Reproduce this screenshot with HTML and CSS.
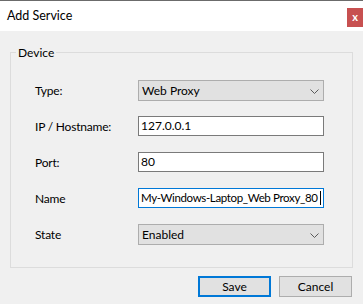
FILE: index.html
```html
<!DOCTYPE html>
<html lang="en">
<head>
    <meta charset="UTF-8">
    <title>Add Service</title>
    <link rel="stylesheet" href="styles.css">
</head>
<body>

    <div class="window">
        <!-- Title bar -->
        <div class="titlebar">
            <span class="title">Add Service</span>
            <span class="close-button">x</span>
        </div>

        <div class="content">
            <fieldset class="group">
                <legend>Device</legend>

                <div class="form-grid">
                    <label>Type:</label>
                    <div class="combo">
                        <span>Web Proxy</span>
                        <svg class="chevron" width="9" height="5" viewBox="0 0 9 5"><path d="M0.5 0.5 L4.5 4.5 L8.5 0.5" fill="none" stroke="#5a5a5a" stroke-width="1"/></svg>
                    </div>

                    <label>IP / Hostname:</label>
                    <div class="textbox">127.0.0.1</div>

                    <label>Port:</label>
                    <div class="textbox">80</div>

                    <label>Name</label>
                    <div class="textbox focused">My-Windows-Laptop_Web Proxy_80<span class="caret"></span></div>

                    <label>State</label>
                    <div class="combo">
                        <span>Enabled</span>
                        <svg class="chevron" width="9" height="5" viewBox="0 0 9 5"><path d="M0.5 0.5 L4.5 4.5 L8.5 0.5" fill="none" stroke="#5a5a5a" stroke-width="1"/></svg>
                    </div>
                </div>
            </fieldset>

            <!-- Dialog buttons -->
            <div class="buttons">
                <button class="default">Save</button>
                <button>Cancel</button>
            </div>
        </div>
    </div>

</body>
</html>
```

FILE: styles.css
```css
/* General Styles */
body {
    margin: 0;
    padding: 0;
    background-color: #f0f0f0;
    font-family: Lato, "Liberation Sans", sans-serif;
    font-size: 12px;
    color: #000;
}

.window {
    width: 363px;
    height: 304px;
    overflow: hidden;
    border-top: 1px solid #6b6b6b;
    box-sizing: border-box;
}

/* Title bar */
.titlebar {
    display: flex;
    justify-content: space-between;
    align-items: flex-start;
    height: 30px;
    background-color: #fff;
}

.title {
    margin-left: 7px;
    line-height: 30px;
    font-size: 12.5px;
}

.close-button {
    width: 16px;
    height: 19px;
    margin-top: 7px;
    background-color: #c75050;
    color: #fff;
    font-weight: bold;
    font-size: 11px;
    line-height: 18px;
    text-align: center;
}

.content {
    padding: 14px 10px 0 10px;
}

/* Group box */
.group {
    margin: 0;
    padding: 20px 0 22px 5px;
    border: 1px solid #dcdcdc;
}

.group legend {
    padding: 0 2px;
    line-height: 15px;
}

.form-grid {
    display: grid;
    grid-template-columns: 103px 186px;
    grid-auto-rows: 21px;
    row-gap: 15px;
    padding-left: 19px;
    align-items: center;
}

.form-grid label {
    letter-spacing: -0.2px;
}

.combo {
    display: flex;
    align-items: center;
    justify-content: space-between;
    height: 21px;
    padding: 0 4px 0 3px;
    box-sizing: border-box;
    background-color: #e1e1e1;
    border: 1px solid #adadad;
}

.chevron {
    margin-top: 1px;
}

.textbox {
    height: 20px;
    align-self: start;
    padding: 0 2px;
    box-sizing: border-box;
    background-color: #fff;
    border: 1px solid #7a7a7a;
    line-height: 18px;
    white-space: nowrap;
    overflow: hidden;
}

.textbox.focused {
    border-color: #0078d7;
    font-size: 11.5px;
    letter-spacing: -0.35px;
}

.caret {
    display: inline-block;
    width: 1px;
    height: 14px;
    margin-left: 2px;
    vertical-align: -3px;
    background-color: #000;
}

/* Buttons */
.buttons {
    display: flex;
    justify-content: flex-end;
    gap: 8px;
    margin-top: 8px;
    padding-right: 1px;
}

.buttons button {
    width: 73px;
    height: 21px;
    padding: 0;
    font-family: inherit;
    font-size: 12px;
    color: #000;
    background-color: #e1e1e1;
    border: 1px solid #adadad;
}

.buttons button.default {
    border: 2px solid #0078d7;
}
```
